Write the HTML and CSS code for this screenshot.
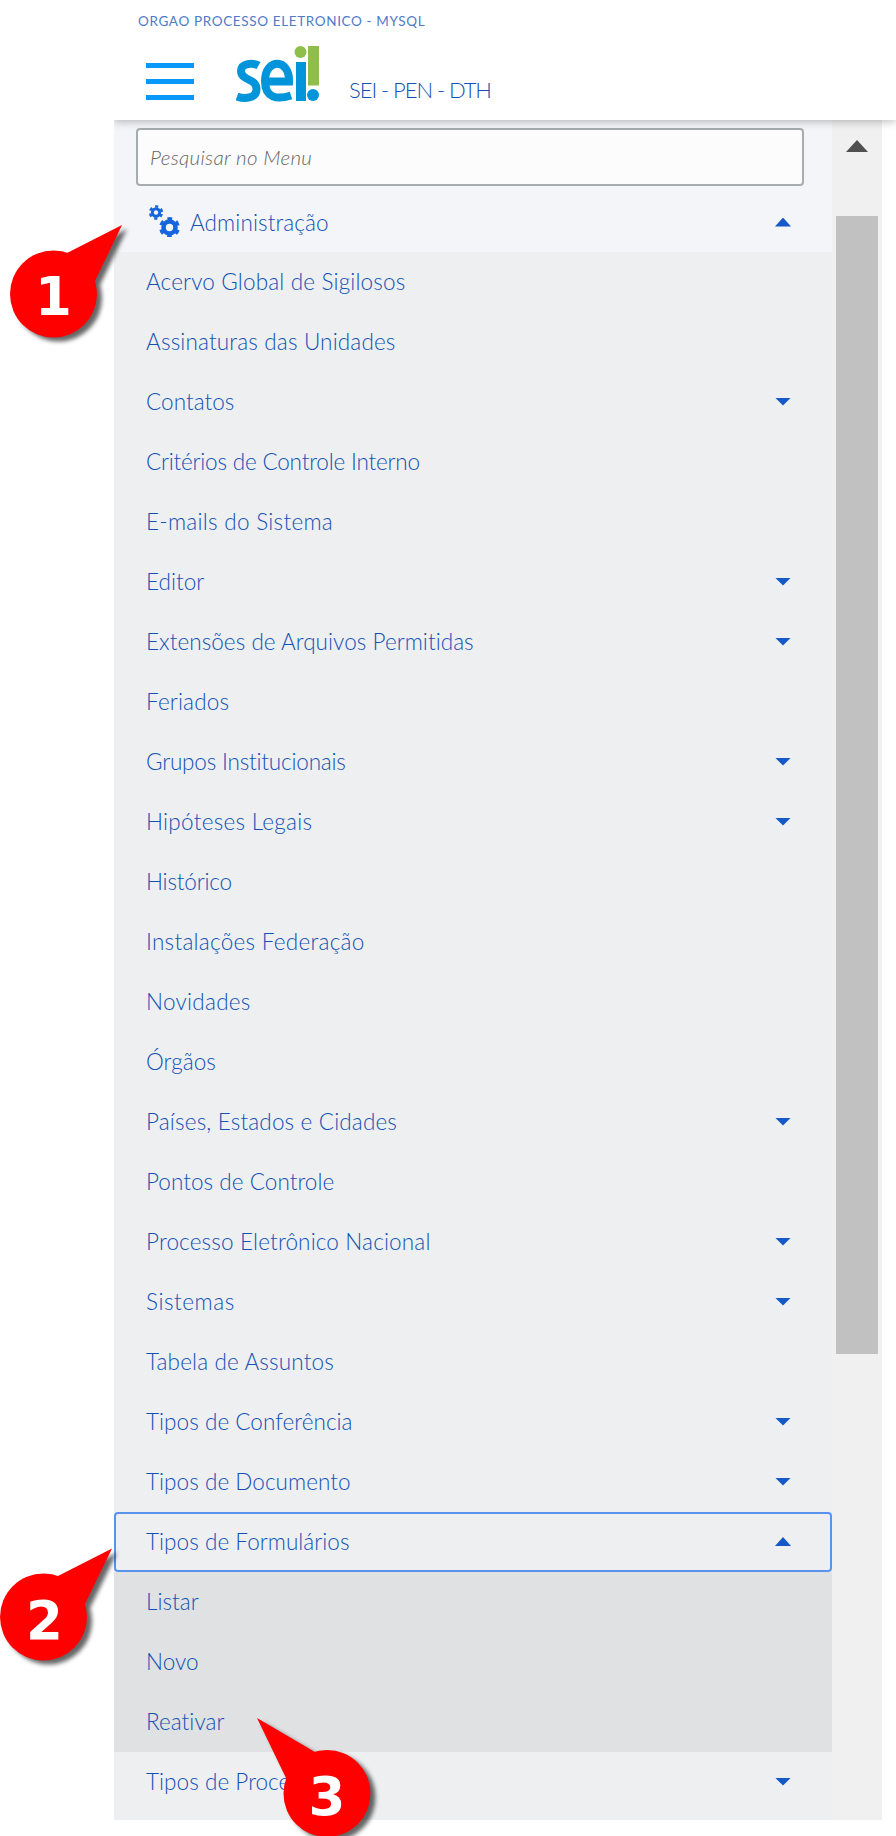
FILE: index.html
```html
<!DOCTYPE html>
<html lang="pt-BR">
<head>
<meta charset="utf-8">
<title>SEI - PEN - DTH</title>
<link rel="stylesheet" href="styles.css">
</head>
<body>
<header class="topbar">
  <div class="orgao">ORGAO PROCESSO ELETRONICO - MYSQL</div>
  <div class="brand">
    <div class="burger"><i></i><i></i><i></i></div>
    <svg class="logo" width="84" height="58" viewBox="0 0 84 58" fill="none">
      <path d="M22.500 19.500C17 16.500 5 17 5 25C5 35 20.500 32 20.500 43C20.500 53 8 53 1 50.500" stroke="#0095da" stroke-width="8"/>
      <path d="M29 35.500H53C54 12 29 12 29 35C29 52 41 54 55 49.500" stroke="#0095da" stroke-width="8"/>
      <path d="M60 16h10v39H60z" fill="#0095da"/>
      <circle cx="64.500" cy="6" r="6" fill="#8fbe4b"/>
      <path d="M72 0h11v39.500H72z" fill="#8fbe4b"/>
      <circle cx="77" cy="49" r="6" fill="#0095da"/>
    </svg>
    <span class="sigla">SEI - PEN - DTH</span>
  </div>
</header>
<main class="panel">
  <nav class="menu">
    <div class="search">Pesquisar no Menu</div>
    <div class="root"><svg class="gears" width="32" height="34" viewBox="0 0 32 34" fill="none" stroke="#1765dc">
        <circle cx="8" cy="9.500" r="3.700" stroke-width="3"/>
        <circle cx="8" cy="9.500" r="6" stroke-width="2.400" stroke-dasharray="3.140 3.140" transform="rotate(15 8 9.500)"/>
        <circle cx="21.500" cy="24.500" r="6" stroke-width="4.600"/>
        <circle cx="21.500" cy="24.500" r="9" stroke-width="2.800" stroke-dasharray="4.710 4.710" transform="rotate(15 21.500 24.500)"/>
      </svg><span>Administração</span><b class="caret up"></b></div>
    <ul class="items">
      <li class="wide">Acervo Global de Sigilosos</li>
      <li class="wide">Assinaturas das Unidades</li>
      <li>Contatos<b class="caret"></b></li>
      <li class="tight">Critérios de Controle Interno</li>
      <li class="wider">E-mails do Sistema</li>
      <li>Editor<b class="caret"></b></li>
      <li>Extensões de Arquivos Permitidas<b class="caret"></b></li>
      <li class="wide">Feriados</li>
      <li class="tight">Grupos Institucionais<b class="caret"></b></li>
      <li class="wider">Hipóteses Legais<b class="caret"></b></li>
      <li class="tight">Histórico</li>
      <li class="wider">Instalações Federação</li>
      <li class="wider">Novidades</li>
      <li>Órgãos</li>
      <li class="wide">Países, Estados e Cidades<b class="caret"></b></li>
      <li>Pontos de Controle</li>
      <li class="wide">Processo Eletrônico Nacional<b class="caret"></b></li>
      <li class="widest">Sistemas<b class="caret"></b></li>
      <li class="wide">Tabela de Assuntos</li>
      <li>Tipos de Conferência<b class="caret"></b></li>
      <li>Tipos de Documento<b class="caret"></b></li>
      <li class="focus">Tipos de Formulários<b class="caret up"></b></li>
      <li class="sub">Listar</li>
      <li class="sub">Novo</li>
      <li class="sub">Reativar</li>
      <li class="last">Tipos de Processo<b class="caret"></b></li>
    </ul>
  </nav>
  <div class="scroll"><b class="arrow"></b><div class="thumb"></div></div>
</main>
<svg class="callouts" width="896" height="1836" viewBox="0 0 896 1836">
  <g class="pin"><circle cx="53.500" cy="294" r="43.500"/><path d="M67 253 122 225 95 281 53 294z"/></g>
  <g class="pin"><circle cx="43.500" cy="1617" r="43.500"/><path d="M57 1576.500 112 1548.500 85 1604 43 1617z"/></g>
  <g class="pin"><circle cx="327" cy="1793.500" r="43.500"/><path d="M315 1752 257 1718 286 1778 327 1794z"/></g>
  <text x="53.500" y="315">1</text>
  <text x="44.500" y="1639">2</text>
  <text x="327" y="1815">3</text>
</svg>
</body>
</html>
```
FILE: styles.css
```css
* { box-sizing: border-box; }
body { margin: 0; width: 896px; height: 1836px; overflow: hidden; position: relative; background: #fff; font-family: Lato, "Open Sans", sans-serif; font-weight: 300; color: #1351b4; font-size: 22.5px; font-variant-ligatures: none; }
.topbar { height: 120px; margin-left: 114px; padding: 13px 0 0 24px; position: relative; box-shadow: 0 2px 8px rgba(0,0,0,.25); clip-path: inset(0 0 -14px 0); z-index: 1; }
.orgao { font-size: 13.5px; line-height: 16px; font-weight: 400; white-space: nowrap; color: #4d7bc9; letter-spacing: .64px; }
.brand { display: flex; align-items: flex-start; padding-top: 17px; }
.burger { display: flex; flex-direction: column; gap: 11px; margin: 17px 42px 0 8px; }
.burger i { width: 48px; height: 5px; background: #0a97fa; }
.logo { width: 84px; height: 58px; }
.sigla { font-size: 22px; margin: 30px 0 0 29px; line-height: 28px; letter-spacing: -1.05px; }
.panel { display: flex; height: 1700px; margin-left: 114px; width: 768px; }
.menu { width: 718px; padding-top: .1px; background: linear-gradient(#f4f5f8 132px, #edeff1 132px); }
.search { height: 58px; margin: 8px 28px 0 22px; border: 2px solid #a7acaf; border-radius: 4px; background: #fcfcfc; padding: 0 12px; line-height: 54px; font-style: italic; font-size: 20.5px; letter-spacing: .3px; color: #666; }
.root { height: 66px; display: flex; align-items: center; padding: 6px 40px 0 34px; letter-spacing: .1px; }
.gears { margin: -5px 10px 0 0; }
.items { list-style: none; margin: 0; padding: 0; }
.items li { height: 60px; display: flex; align-items: center; padding: 0 40px 1px 32px; white-space: nowrap; letter-spacing: .05px; }
.items .tight { letter-spacing: -.19px; }
.items .wide { letter-spacing: .16px; }
.items .wider { letter-spacing: .28px; }
.items .widest { letter-spacing: .55px; }
.items .focus { border: 2px solid #5894ee; border-radius: 4px; padding: 0 38px 1px 30px; }
.items .sub { background: #dfe1e3; }
.items .last { height: 68px; padding-bottom: 9px; }
.caret { margin: 0 1px 0 auto; width: 16px; height: 8px; background: #1558c8; clip-path: polygon(0 0, 100% 0, 50% 100%); }
.caret.up { clip-path: polygon(50% 0, 100% 100%, 0 100%); height: 9px; }
.scroll { width: 50px; background: #f0f0f0; padding: 20px 4px 0; }
.arrow { display: block; width: 22px; height: 12px; margin: 0 0 64px 10px; background: #505050; clip-path: polygon(50% 0, 100% 100%, 0 100%); }
.thumb { height: 1138px; background: #c1c1c1; }
.callouts { position: absolute; left: 0; top: 0; z-index: 2; }
.pin { fill: #f00; filter: drop-shadow(5px 4px 2px rgba(0,0,0,.6)); }
.callouts text { font: bold 53px "DejaVu Sans", sans-serif; fill: #fff; text-anchor: middle; }
```
